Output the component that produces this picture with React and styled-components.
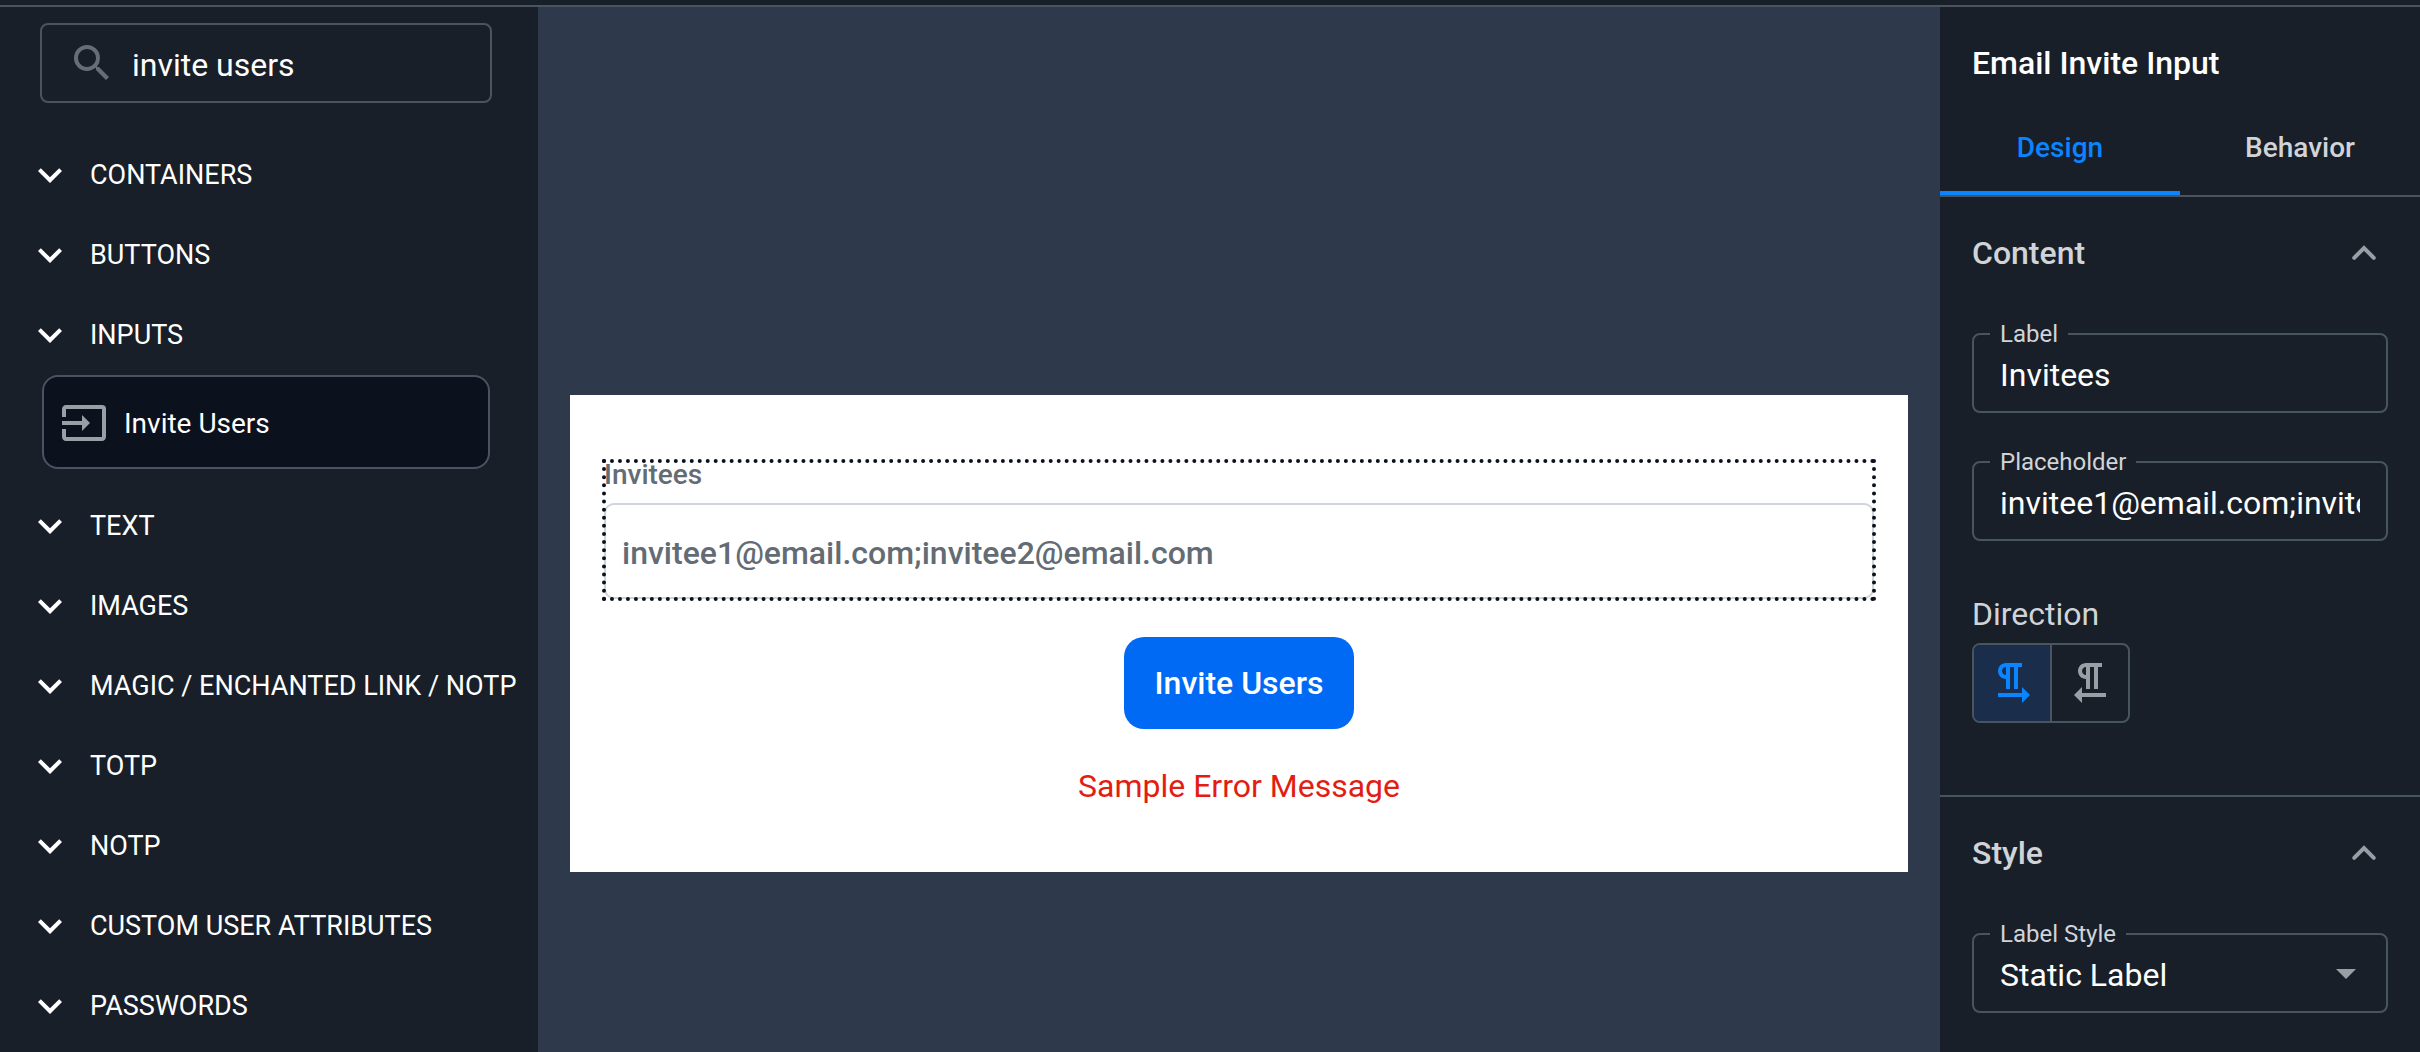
import { useState } from "react";
import styled, { createGlobalStyle } from "styled-components";
import {
    MdExpandMore,
    MdSearch,
    MdInput,
    MdArrowDropDown,
    MdOutlineFormatTextdirectionLToR,
    MdOutlineFormatTextdirectionRToL
} from "react-icons/md";

const categories = [
    { name: 'CONTAINERS' },
    { name: 'BUTTONS' },
    { name: 'INPUTS', items: ['Invite Users'] },
    { name: 'TEXT' },
    { name: 'IMAGES' },
    { name: 'MAGIC / ENCHANTED LINK / NOTP' },
    { name: 'TOTP' },
    { name: 'NOTP' },
    { name: 'CUSTOM USER ATTRIBUTES' },
    { name: 'PASSWORDS' }
]

function ComponentList() {
    return (
        <Sidebar>
            <SearchBox>
                <MdSearch size={48} />
                <SearchInput aria-label="Search components" defaultValue="invite users" />
            </SearchBox>
            {categories.map(({ name, items = [] }) => (
                <div key={name}>
                    <Category type="button">
                        <MdExpandMore size={48} />
                        {name}
                    </Category>
                    {items.map(item => (
                        <CategoryItem key={item} type="button">
                            <MdInput size={48} />
                            {item}
                        </CategoryItem>
                    ))}
                </div>
            ))}
        </Sidebar>
    )
}

function Preview() {
    return (
        <Canvas>
            <PreviewCard>
                <SelectedBlock>
                    <InviteLabel htmlFor="invitees">Invitees</InviteLabel>
                    <InviteInput
                        id="invitees"
                        placeholder="invitee1@email.com;invitee2@email.com" />
                </SelectedBlock>
                <InviteButton type="button">Invite Users</InviteButton>
                <ErrorMessage>Sample Error Message</ErrorMessage>
            </PreviewCard>
        </Canvas>
    )
}

function Section({ title, children }) {
    return (
        <SectionContainer>
            <SectionHeader type="button" aria-expanded="true">
                {title}
                <svg width="48" height="48" viewBox="0 0 24 24" fill="none" stroke="#9a9ea5"
                    strokeWidth="2" strokeLinecap="round">
                    <path d="M7.1 14.4 12 9.5l4.9 4.9" />
                </svg>
            </SectionHeader>
            <SectionBody>{children}</SectionBody>
        </SectionContainer>
    )
}

function Field({ id, label, children }) {
    return (
        <FieldBox>
            <FieldLabel htmlFor={id}>{label}</FieldLabel>
            {children}
        </FieldBox>
    )
}

function Properties() {
    const [tab, setTab] = useState('Design')
    const [direction, setDirection] = useState('ltr')

    return (
        <Panel>
            <PanelTitle>Email Invite Input</PanelTitle>
            <Tabs role="tablist">
                {['Design', 'Behavior'].map(name => (
                    <Tab
                        key={name}
                        type="button"
                        role="tab"
                        aria-selected={tab === name}
                        $active={tab === name}
                        onClick={() => setTab(name)}>
                        {name}
                    </Tab>
                ))}
            </Tabs>
            <Section title="Content">
                <Field id="label" label="Label">
                    <FieldInput id="label" defaultValue="Invitees" />
                </Field>
                <Field id="placeholder" label="Placeholder">
                    <FieldInput id="placeholder" defaultValue="invitee1@email.com;invitee2@email.com" />
                </Field>
                <div>
                    <GroupLabel id="direction">Direction</GroupLabel>
                    <ToggleGroup role="group" aria-labelledby="direction">
                        <Toggle
                            type="button"
                            aria-label="Left to right"
                            $active={direction === 'ltr'}
                            onClick={() => setDirection('ltr')}>
                            <MdOutlineFormatTextdirectionLToR size={48} />
                        </Toggle>
                        <Toggle
                            type="button"
                            aria-label="Right to left"
                            $active={direction === 'rtl'}
                            onClick={() => setDirection('rtl')}>
                            <MdOutlineFormatTextdirectionRToL size={48} />
                        </Toggle>
                    </ToggleGroup>
                </div>
            </Section>
            <Section title="Style">
                <Field id="label-style" label="Label Style">
                    <FieldSelect id="label-style">
                        <option>Static Label</option>
                        <option>Floating Label</option>
                    </FieldSelect>
                    <MdArrowDropDown size={48} />
                </Field>
            </Section>
        </Panel>
    )
}

function App() {
    return (
        <>
            <GlobalStyle />
            <Page>
                <TopBar />
                <Editor>
                    <ComponentList />
                    <Preview />
                    <Properties />
                </Editor>
            </Page>
        </>
    )
}

export default App;


const GlobalStyle = createGlobalStyle`
    * {
        box-sizing: border-box;
    }
    body {
        margin: 0;
        background-color: #181f28;
        color: white;
        font-family: Roboto, sans-serif;
    }
    button, input, select {
        font-family: inherit;
        color: inherit;
        background: none;
        border: 0;
        margin: 0;
        padding: 0;
        outline: none;
    }
    button {
        cursor: pointer;
    }
    svg {
        flex-shrink: 0;
    }
`

const Page = styled.div`
    display: flex;
    flex-direction: column;
    height: 100vh;
    overflow: hidden;
`

const TopBar = styled.header`
    flex: 0 0 7px;
    border-bottom: 2px solid #485560;
`

const Editor = styled.div`
    flex: 1;
    min-height: 0;
    display: grid;
    grid-template-columns: 538px 1fr 480px;
`

const Sidebar = styled.aside`
    padding-top: 16px;
    overflow: hidden;
`

const SearchBox = styled.div`
    display: flex;
    align-items: center;
    gap: 16px;
    height: 80px;
    margin: 0 46px 32px 40px;
    padding: 0 26px;
    border: 2px solid #485560;
    border-radius: 8px;
    color: #656d76;
`

const SearchInput = styled.input`
    flex: 1;
    min-width: 0;
    padding-top: 4px;
    font-size: 32px;
    color: white;
`

const Category = styled.button`
    display: flex;
    align-items: center;
    gap: 16px;
    width: 100%;
    height: 80px;
    padding-left: 26px;
    font-size: 27px;
    white-space: nowrap;
`

const CategoryItem = styled.button`
    display: flex;
    align-items: center;
    gap: 16px;
    width: 448px;
    height: 94px;
    margin: 0 42px 17px 42px;
    padding: 2px 16px 0;
    border: 2px solid #485560;
    border-radius: 16px;
    background-color: #0c111e;
    font-size: 28px;

    svg {
        color: #9a9ea5;
    }
`

const Canvas = styled.main`
    padding: 388px 32px 0;
    background-color: #2e3a4b;
`

const PreviewCard = styled.div`
    display: flex;
    flex-direction: column;
    align-items: center;
    gap: 38px;
    padding: 66px 34px;
    background-color: white;
`

const SelectedBlock = styled.div`
    width: 100%;
    outline: 4px dotted #0c111e;
    outline-offset: -2px;
`

const InviteLabel = styled.label`
    display: block;
    margin-bottom: 14px;
    font-size: 28px;
    line-height: 28px;
    font-weight: 500;
    color: #636c74;
`

const InviteInput = styled.input`
    display: block;
    width: 100%;
    height: 96px;
    padding: 4px 16px 0;
    border: 2px solid #cfd5da;
    border-radius: 10px;
    font-size: 32px;
    font-weight: 500;
    color: #181f28;

    &::placeholder {
        color: #636c74;
        opacity: 1;
    }
`

const InviteButton = styled.button`
    height: 92px;
    padding: 0 31px;
    border-radius: 20px;
    background-color: #006af5;
    font-size: 32px;
    font-weight: 500;
`

const ErrorMessage = styled.p`
    margin: 0;
    font-size: 32px;
    line-height: 39px;
    color: #e21d12;
`

const Panel = styled.aside`
    overflow: hidden;
`

const PanelTitle = styled.h2`
    margin: 0;
    padding: 36px 32px 16px;
    font-size: 32px;
    line-height: 40px;
    font-weight: 500;
`

const Tabs = styled.div`
    display: flex;
    height: 98px;
    border-bottom: 2px solid #485560;
`

const Tab = styled.button`
    flex: 1;
    font-size: 28px;
    font-weight: 500;
    color: ${({ $active }) => $active ? '#0a84ff' : '#d0d4d9'};
    box-shadow: ${({ $active }) => $active ? 'inset 0 -4px #0a84ff' : 'none'};
`

const SectionContainer = styled.section`
    & + & {
        border-top: 2px solid #485560;
    }
`

const SectionHeader = styled.button`
    display: flex;
    align-items: center;
    justify-content: space-between;
    width: 100%;
    height: 112px;
    padding: 0 32px;
    font-size: 32px;
    font-weight: 500;
    color: #d0d4d9;
`

const SectionBody = styled.div`
    display: flex;
    flex-direction: column;
    gap: 48px;
    padding: 24px 32px 72px;
`

const FieldBox = styled.div`
    position: relative;
    display: flex;
    align-items: center;
    height: 80px;
    border: 2px solid #485560;
    border-radius: 8px;

    svg {
        position: absolute;
        right: 16px;
        color: #9a9ea5;
        pointer-events: none;
    }
`

const FieldLabel = styled.label`
    position: absolute;
    top: -15px;
    left: 16px;
    padding: 0 10px;
    background-color: #181f28;
    font-size: 24px;
    line-height: 28px;
    color: #d0d4d9;
`

const FieldInput = styled.input`
    width: 100%;
    margin: 0 26px;
    padding-top: 4px;
    font-size: 32px;
`

const FieldSelect = styled.select`
    appearance: none;
    width: 100%;
    height: 100%;
    padding: 4px 26px 0;
    font-size: 32px;
`

const GroupLabel = styled.div`
    padding-top: 6px;
    margin-bottom: 10px;
    font-size: 32px;
    line-height: 38px;
    color: #d0d4d9;
`

const ToggleGroup = styled.div`
    display: inline-flex;
    height: 80px;
    border: 2px solid #485560;
    border-radius: 8px;
    overflow: hidden;
    vertical-align: top;
`

const Toggle = styled.button`
    display: flex;
    align-items: center;
    justify-content: center;
    width: 76px;
    color: ${({ $active }) => $active ? '#0a84ff' : '#9a9ea5'};
    background-color: ${({ $active }) => $active ? '#1a2e4b' : 'transparent'};

    & + & {
        width: 78px;
        border-left: 2px solid #485560;
    }
`
